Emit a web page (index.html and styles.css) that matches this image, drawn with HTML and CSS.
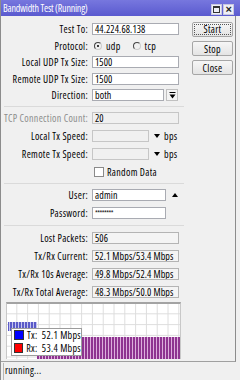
FILE: index.html
```html
<!DOCTYPE html>
<html lang="en">
<head>
    <meta charset="UTF-8">
    <meta name="viewport" content="width=device-width, initial-scale=1.0">
    <title>Bandwidth Test</title>
    <link rel="stylesheet" href="styles.css">
</head>
<body>
    <div class="window">
        <div class="titlebar">
            <span class="title">Bandwidth Test (Running)</span>
            <div class="tb-btns">
                <span class="tb-btn"><span class="max-icon"></span></span>
                <span class="tb-btn close-icon">&#215;</span>
            </div>
        </div>

        <div class="main">
            <div class="form">
                <div class="group first">
                    <div class="row">
                        <span class="label">Test To:</span>
                        <span class="field full">44.224.68.138</span>
                    </div>
                    <div class="row">
                        <span class="label">Protocol:</span>
                        <span class="choice"><span class="radio on"></span>udp</span>
                        <span class="choice"><span class="radio"></span>tcp</span>
                    </div>
                    <div class="row">
                        <span class="label">Local UDP Tx Size:</span>
                        <span class="field full">1500</span>
                    </div>
                    <div class="row">
                        <span class="label">Remote UDP Tx Size:</span>
                        <span class="field full">1500</span>
                    </div>
                    <div class="row">
                        <span class="label">Direction:</span>
                        <span class="field select">both</span>
                        <span class="drop-btn">
                            <svg width="7" height="7" viewBox="0 0 7 7"><path d="M0.5 0.5H6.5" stroke="#000"/><path d="M0.5 2.5H6.5L3.5 6.5Z" fill="#000"/></svg>
                        </span>
                    </div>
                </div>

                <div class="group tall">
                    <div class="row">
                        <span class="label disabled">TCP Connection Count:</span>
                        <span class="field full off">20</span>
                    </div>
                    <div class="row">
                        <span class="label">Local Tx Speed:</span>
                        <span class="field short off"></span>
                        <span class="tri down"></span>
                        <span class="unit">bps</span>
                    </div>
                    <div class="row">
                        <span class="label">Remote Tx Speed:</span>
                        <span class="field short off"></span>
                        <span class="tri down"></span>
                        <span class="unit">bps</span>
                    </div>
                    <div class="row">
                        <span class="label"></span>
                        <span class="choice"><span class="check"></span>Random Data</span>
                    </div>
                </div>

                <div class="group tall">
                    <div class="row">
                        <span class="label">User:</span>
                        <span class="field mid">admin</span>
                        <span class="tri up"></span>
                    </div>
                    <div class="row">
                        <span class="label">Password:</span>
                        <span class="field mid pass">********</span>
                    </div>
                </div>

                <div class="group tall last">
                    <div class="row">
                        <span class="label">Lost Packets:</span>
                        <span class="field full ro">506</span>
                    </div>
                    <div class="row">
                        <span class="label">Tx/Rx Current:</span>
                        <span class="field full ro">52.1 Mbps/53.4 Mbps</span>
                    </div>
                    <div class="row">
                        <span class="label">Tx/Rx 10s Average:</span>
                        <span class="field full ro">49.8 Mbps/52.4 Mbps</span>
                    </div>
                    <div class="row">
                        <span class="label">Tx/Rx Total Average:</span>
                        <span class="field full ro">48.3 Mbps/50.0 Mbps</span>
                    </div>
                </div>

                <div class="graph">
                    <svg width="173" height="55" viewBox="0 0 173 55">
                        <defs>
                            <pattern id="grid" width="10.8" height="10.8" patternUnits="userSpaceOnUse" x="-0.5" y="-0.5">
                                <path d="M10.3 0V10.8M0 10.3H10.8" stroke="#dddddd" fill="none"/>
                            </pattern>
                            <pattern id="txbars" width="3" height="10" patternUnits="userSpaceOnUse">
                                <rect width="2" height="10" fill="#5a5ac8"/>
                                <rect x="2" width="1" height="10" fill="#c4c4ee"/>
                            </pattern>
                            <pattern id="rxbars" width="3" height="30" patternUnits="userSpaceOnUse">
                                <rect width="2" height="30" fill="#8e3490"/>
                                <rect x="2" width="1" height="30" fill="#dcaedc"/>
                            </pattern>
                        </defs>
                        <rect width="173" height="55" fill="#ffffff"/>
                        <rect width="173" height="55" fill="url(#grid)"/>
                        <rect x="1" y="18" width="29" height="9" fill="url(#txbars)"/>
                        <rect x="30" y="33" width="143" height="22" fill="url(#rxbars)"/>
                    </svg>
                    <div class="legend">
                        <div class="legend-row"><span class="swatch tx"></span>Tx:&nbsp; 52.1 Mbps</div>
                        <div class="legend-row"><span class="swatch rx"></span>Rx:&nbsp; 53.4 Mbps</div>
                    </div>
                </div>
            </div>

            <div class="actions">
                <button class="btn focused"><span>Start</span></button>
                <button class="btn">Stop</button>
                <button class="btn">Close</button>
            </div>
        </div>

        <div class="status">running...</div>
    </div>
</body>
</html>
```

FILE: styles.css
```css
body {
    margin: 0;
    background: #f0f0f0;
    font-family: "Open Sans", "Liberation Sans", Arial, sans-serif;
    font-stretch: 82%;
    font-size: 10px;
    letter-spacing: 0.3px;
    color: #000;
}
.window {
    width: 240px;
    height: 380px;
    display: flex;
    flex-direction: column;
    background: #f0f0f0;
    border-left: 1px solid #8c8c8c;
    box-sizing: border-box;
}
.titlebar {
    height: 16px;
    display: flex;
    align-items: center;
    justify-content: space-between;
    padding: 0 6px 0 2px;
    background: linear-gradient(#7777de, #5a5acf);
    color: #fff;
    font-stretch: 75%;
    font-size: 10px;
    letter-spacing: -0.2px;
}
.tb-btns {
    display: flex;
    gap: 1px;
    margin-top: 2px;
}
.tb-btn {
    width: 9px;
    height: 9px;
    display: flex;
    align-items: center;
    justify-content: center;
    background: #eeeef6;
    border: 1px solid #c8c8e0;
    color: #222;
    font-family: "Liberation Sans", Arial, sans-serif;
    font-size: 11px;
    font-weight: bold;
    line-height: 9px;
}
.max-icon {
    width: 5px;
    height: 4px;
    border: 1px solid #333;
    border-top-width: 2px;
}
.main {
    flex: 1;
    display: flex;
    border-right: 1px solid #8c8c8c;
    border-bottom: 1px solid #a0a0a0;
    margin-right: 4px;
}
.form {
    width: 180px;
    padding-left: 3px;
}
.group.first {
    padding-top: 5px;
}
.group + .group {
    border-top: 1px solid #dadada;
    margin-top: 2px;
    padding-top: 2px;
}
.group.last {
    margin-top: 3px;
    padding-top: 3px;
}
.row {
    display: flex;
    align-items: center;
    height: 16.5px;
}
.tall .row {
    height: 18px;
}
.label {
    width: 84px;
    flex: none;
    text-align: right;
    margin-right: 4px;
    white-space: nowrap;
}
.label.disabled {
    color: #8d8d8d;
}
.field {
    height: 12px;
    box-sizing: border-box;
    border: 1px solid #a9abb2;
    background: #fff;
    padding-left: 2px;
    line-height: 10px;
    letter-spacing: 0.1px;
    white-space: nowrap;
    overflow: hidden;
}
.field.full { width: 87px; }
.field.select { width: 72px; }
.field.short { width: 57px; }
.field.mid { width: 74px; }
.field.off {
    background: #f0f0f0;
    border-color: #c6c6c6;
}
.field.ro {
    background: #f4f4f4;
    border-color: #b4b4b4;
}
.field.pass {
    font-size: 7px;
    letter-spacing: -0.5px;
}
.drop-btn {
    width: 12px;
    height: 12px;
    margin-left: 2px;
    box-sizing: border-box;
    border: 1px solid #c0c0c0;
    background: #f4f4f4;
    display: flex;
    align-items: center;
    justify-content: center;
}
.tri {
    width: 0;
    height: 0;
    margin: 0 4px 0 5px;
    border-left: 3.5px solid transparent;
    border-right: 3.5px solid transparent;
}
.tri.down { border-top: 4px solid #000; }
.tri.up { border-bottom: 4px solid #000; margin-left: 6px; }
.choice {
    display: flex;
    align-items: center;
    margin-left: 2px;
    margin-right: 10px;
    white-space: nowrap;
}
.radio {
    width: 6px;
    height: 6px;
    margin-right: 4px;
    border: 1px solid #444;
    border-radius: 50%;
    border-right-color: #ccc;
    border-bottom-color: #ccc;
    display: flex;
    align-items: center;
    justify-content: center;
}
.radio.on::after {
    content: "";
    width: 2px;
    height: 2px;
    border-radius: 50%;
    background: #000;
}
.check {
    width: 8px;
    height: 8px;
    margin-right: 3px;
    border: 1px solid #8a8a8a;
    background: #fff;
}
.graph {
    position: relative;
    width: 173px;
    margin-top: 1px;
    border-top: 2px solid #a3a3a3;
    border-left: 1px solid #c8c8c8;
    border-right: 1px solid #c8c8c8;
    margin-left: 2px;
    height: 55px;
}
.graph svg {
    display: block;
}
.legend {
    position: absolute;
    left: 4px;
    top: 24px;
    width: 67px;
    padding: 0 0 0 2px;
    background: #fff;
    border: 1px solid #9c9c9c;
}
.legend-row {
    display: flex;
    align-items: center;
    height: 13px;
    line-height: 13px;
    white-space: nowrap;
}
.swatch {
    width: 8px;
    height: 8px;
    margin-right: 3px;
    border: 1px solid #333;
}
.swatch.tx { background: #0000ff; }
.swatch.rx { background: #ff0000; }
.actions {
    display: flex;
    flex-direction: column;
    gap: 4px;
    padding: 6px 0 0 8px;
}
.btn {
    width: 41px;
    height: 15px;
    padding: 0;
    border: 1px solid #a6a6a6;
    border-radius: 2px;
    background: linear-gradient(#f6f6f6, #e4e4e4);
    font-family: inherit;
    font-stretch: 82%;
    font-size: 10px;
    letter-spacing: 0.3px;
    color: #000;
}
.btn.focused {
    padding: 1px;
}
.btn.focused span {
    display: block;
    height: 100%;
    border: 1px dotted #555;
    box-sizing: border-box;
    line-height: 9px;
}
.status {
    height: 17px;
    line-height: 15px;
    margin: 1px 0 0 2px;
    padding-left: 1px;
    border-left: 1px solid #b8b8b8;
}
```
